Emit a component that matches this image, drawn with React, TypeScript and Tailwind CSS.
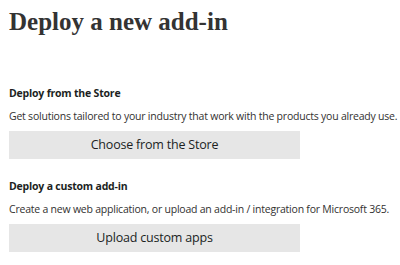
import React from 'react';

const Section: React.FC<{ title: string; text: string; button: string }> = ({ title, text, button }) => (
  <div>
    <h3 className="text-[10.5px] font-bold leading-[14px] tracking-[-0.2px] text-[#201f1e]">{title}</h3>
    <p className="mt-[9px] whitespace-nowrap text-[10.5px] leading-[14px] tracking-[-0.22px] text-[#323130]">{text}</p>
    <button className="mt-[8px] h-[28px] w-[291px] bg-[#e6e6e6] text-[12.5px] tracking-[-0.2px] text-[#201f1e]">
      {button}
    </button>
  </div>
);

export default function App() {
  return (
    <div className="h-[265px] w-[400px] overflow-hidden bg-white px-[9px] font-['Open_Sans',sans-serif]">
      <h1 className="pt-[7px] font-['Liberation_Serif',serif] text-[25px] font-bold leading-[30px] text-[#333]">
        Deploy a new add-in
      </h1>
      <div className="mt-[49px] flex flex-col gap-[20px]">
        <Section
          title="Deploy from the Store"
          text="Get solutions tailored to your industry that work with the products you already use."
          button="Choose from the Store"
        />
        <Section
          title="Deploy a custom add-in"
          text="Create a new web application, or upload an add-in / integration for Microsoft 365."
          button="Upload custom apps"
        />
      </div>
    </div>
  );
}
